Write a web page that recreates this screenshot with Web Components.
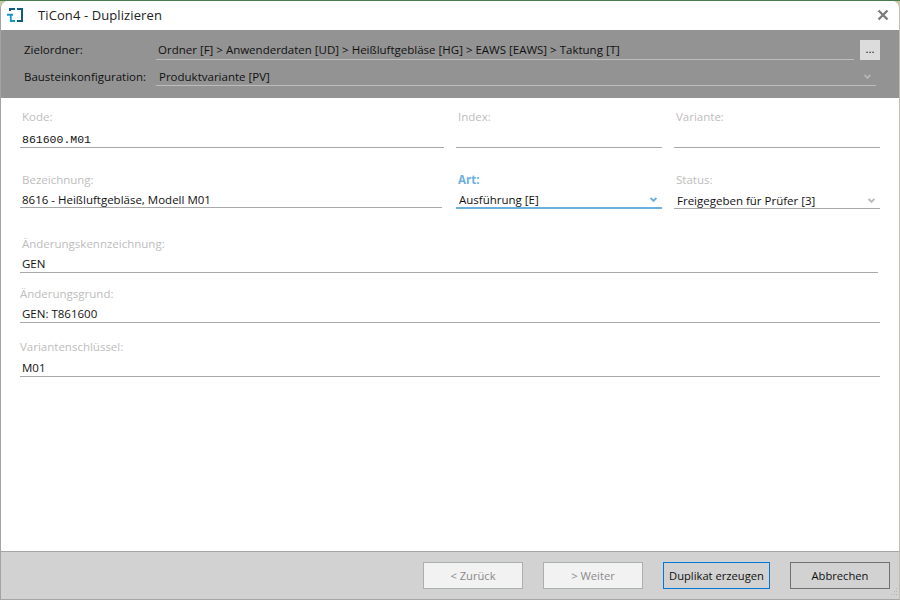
<!DOCTYPE html>
<html lang="de">
<head>
<meta charset="utf-8">
<title>TiCon4 - Duplizieren</title>
<style>
    html, body { margin: 0; height: 100%; overflow: hidden; }
    body { background: #c9c9a6; border-top: 1px solid #4b7a4b; box-sizing: border-box; font-family: "Open Sans", "Noto Sans", sans-serif; }
</style>
</head>
<body>

<ti-window caption="TiCon4 - Duplizieren">
    <ti-target slot="band" label="Zielordner:" value="Ordner [F] &gt; Anwenderdaten [UD] &gt; Heißluftgebläse [HG] &gt; EAWS [EAWS] &gt; Taktung [T]" browse></ti-target>
    <ti-target slot="band" label="Bausteinkonfiguration:" value="Produktvariante [PV]" select></ti-target>

    <ti-field-grid>
        <ti-field label="Kode:" value="861600.M01" mono style="--label-gap: 4px; --value-top: 5px"></ti-field>
        <ti-field label="Index:" value="" style="--label-gap: 4px"></ti-field>
        <ti-field label="Variante:" value="" style="--label-gap: 4px"></ti-field>
        <ti-field label="Bezeichnung:" value="8616 - Heißluftgebläse, Modell M01" style="margin: 25px 2px 1px 0"></ti-field>
        <ti-field label="Art:" value="Ausführung [E]" select focused style="margin-top: 25px; --value-height: 21px; --value-top: 5px"></ti-field>
        <ti-field label="Status:" value="Freigegeben für Prüfer [3]" select style="margin-top: 25px; --value-height: 21px; --value-top: 5px"></ti-field>
        <ti-field label="Änderungskennzeichnung:" value="GEN" style="grid-column: 1 / -1; margin: 28px 2px 0 0; --value-height: 21px"></ti-field>
        <ti-field label="Änderungsgrund:" value="GEN: T861600" flush style="grid-column: 1 / -1; margin-top: 14px; --value-height: 21px"></ti-field>
        <ti-field label="Variantenschlüssel:" value="M01" flush style="grid-column: 1 / -1; margin-top: 17px; --value-height: 22px"></ti-field>
    </ti-field-grid>

    <ti-button slot="footer" disabled>&lt; Zurück</ti-button>
    <ti-button slot="footer" disabled>&gt; Weiter</ti-button>
    <ti-button slot="footer" primary>Duplikat erzeugen</ti-button>
    <ti-button slot="footer">Abbrechen</ti-button>
</ti-window>

<script>
(function() {
    const chevron = (color) => `<svg class="chevron" width="7" height="6" viewBox="0 0 7 6"><path d="M.6 1 L3.5 3.9 L6.4 1" fill="none" stroke="${color}" stroke-width="2"/></svg>`;

    /*
     *     Window frame: caption, grey band, content, footer
     */
    class TiWindow extends HTMLElement {
        constructor() {
            super();
            this.attachShadow({mode: 'open'});
            this.shadowRoot.innerHTML = `
<style>
    :host { display: flex; flex-direction: column; height: 599px; box-sizing: border-box; background: #fff; border-radius: 8px 8px 0 0; border-left: 1px solid #a3a3a3; border-right: 1px solid #bdbdb0; overflow: hidden; position: relative; }
    .caption { display: flex; align-items: center; height: 29px; flex: none; box-sizing: border-box; padding: 0 0 1px 6px; background: #fff; }
    .caption svg.logo { flex: none; }
    .caption span { margin-left: 13px; font-size: 13px; color: #222; flex: 1; letter-spacing: .1px; }
    .close { margin-right: 10px; }
    .band { flex: none; height: 68px; box-sizing: border-box; padding: 10px 19px 0 22px; background: #939393; display: flex; flex-direction: column; gap: 6px; }
    .main { flex: 1; min-height: 0; background: #fff; }
    .footer { flex: none; height: 49px; box-sizing: border-box; border-top: 1px solid #a6a6a6; border-bottom: 1px solid #a6a6a6; background: #d2d2d2; display: flex; justify-content: flex-end; align-items: center; gap: 20px; padding: 0 9px 0 0; position: relative; }
    .grip { position: absolute; right: 1px; bottom: 1px; }
</style>
<div class="caption">
    <svg class="logo" width="18" height="18" viewBox="0 0 18 18">
        <path d="M3 5 V3 H8 M10 3 H15 V15 H10" fill="none" stroke="#0d5f7f" stroke-width="2"/>
        <path d="M0 8.75 H6 M3.75 8.75 V15 H8" fill="none" stroke="#1496c4" stroke-width="1.8"/>
    </svg>
    <span></span>
    <svg class="close" width="12" height="12" viewBox="0 0 12 12"><path d="M1.5 1.5 L10.5 10.5 M10.5 1.5 L1.5 10.5" stroke="#7c7c7c" stroke-width="2.4"/></svg>
</div>
<div class="band"><slot name="band"></slot></div>
<div class="main"><slot></slot></div>
<div class="footer">
    <slot name="footer"></slot>
    <svg class="grip" width="10" height="10" viewBox="0 0 10 10" fill="#b4b4b4"><rect x="8" y="0" width="1" height="1"/><rect x="6" y="3" width="1" height="1"/><rect x="8" y="3" width="1" height="1"/><rect x="3" y="6" width="1" height="1"/><rect x="6" y="6" width="1" height="1"/><rect x="8" y="6" width="1" height="1"/></svg>
</div>`;
            this.shadowRoot.querySelector('.caption span').textContent = this.getAttribute('caption');
        }
    }

    /*
     *     A row of the grey band
     */
    class TiTarget extends HTMLElement {
        constructor() {
            super();
            this.attachShadow({mode: 'open'});
            this.shadowRoot.innerHTML = `
<style>
    :host { display: flex; align-items: flex-end; height: 20px; font-size: 11.5px; color: #111; position: relative; }
    .label { width: 133px; height: 20px; flex: none; padding-left: 1px; box-sizing: border-box; line-height: 20px; }
    .value { flex: 1; height: 20px; line-height: 16px; box-sizing: border-box; border-bottom: 1px solid #bdbdbd; padding-left: 2px; display: flex; justify-content: space-between; align-items: center; margin-right: 4px; white-space: nowrap; }
    :host([browse]) .value { margin-right: 6px; }
    :host([select]) .label { padding-top: 2px; line-height: 18px; }
    :host([select]) .value { padding: 2px 0 0 3px; }
    .chevron { margin-right: 5px; }
    button { width: 20px; height: 20px; padding: 0 0 2px; border: 0; background: #dcdcdc; color: #111; font: inherit; line-height: 1; }
</style>
<div class="label"></div>
<div class="value"><span></span></div>`;
            this.shadowRoot.querySelector('.label').textContent = this.getAttribute('label');
            this.shadowRoot.querySelector('.value span').textContent = this.getAttribute('value');
            if (this.hasAttribute('browse')) {
                const button = document.createElement('button');
                button.textContent = '...';
                this.shadowRoot.appendChild(button);
            }
            if (this.hasAttribute('select')) {
                this.shadowRoot.querySelector('.value').insertAdjacentHTML('beforeend', chevron('#b4b4b4'));
            }
        }
    }

    /*
     *     Grid holding the form fields
     */
    class TiFieldGrid extends HTMLElement {
        constructor() {
            super();
            this.attachShadow({mode: 'open'});
            this.shadowRoot.innerHTML = `
<style>
    :host { display: grid; grid-template-columns: 424px 206px 206px; column-gap: 12px; padding: 12px 0 0 19px; align-items: end; }
</style>
<slot></slot>`;
        }
    }

    /*
     *     Label over a value with an underline
     */
    class TiField extends HTMLElement {
        constructor() {
            super();
            this.attachShadow({mode: 'open'});
            this.shadowRoot.innerHTML = `
<style>
    :host { display: block; min-width: 0; font-size: 11.5px; color: #111; }
    .label { height: 14px; line-height: 14px; padding-left: 2px; color: #bdbdbd; margin-bottom: var(--label-gap, 1px); white-space: nowrap; }
    :host([flush]) .label { padding-left: 0; }
    .value { height: var(--value-height, 20px); line-height: 16px; box-sizing: border-box; border-bottom: 1px solid #a8a8a8; padding: var(--value-top, 4px) 0 0 2px; display: flex; justify-content: space-between; align-items: center; white-space: nowrap; }
    :host([select]) .value { padding-left: 3px; }
    :host([mono]) .value { font-family: "Liberation Mono", monospace; }
    .chevron { margin-right: 5px; }
    :host([focused]) .label { color: #6bb0e0; font-weight: 700; }
    :host([focused]) .value { border-bottom: 2px solid #6bb0e0; }
</style>
<div class="label"></div>
<div class="value"><span></span></div>`;
            this.shadowRoot.querySelector('.label').textContent = this.getAttribute('label');
            this.shadowRoot.querySelector('.value span').textContent = this.getAttribute('value');
            if (this.hasAttribute('select')) {
                const color = this.hasAttribute('focused') ? '#6bb0e0' : '#bdbdbd';
                this.shadowRoot.querySelector('.value').insertAdjacentHTML('beforeend', chevron(color));
            }
        }
    }

    class TiButton extends HTMLElement {
        constructor() {
            super();
            this.attachShadow({mode: 'open'});
            this.shadowRoot.innerHTML = `
<style>
    :host { display: flex; align-items: center; justify-content: center; width: 100px; height: 27px; box-sizing: border-box; border: 1px solid #707070; background: #d2d2d2; color: #111; font-size: 11.2px; }
    :host([disabled]) { border-color: #aab0b0; background: #f2f2f2; color: #8a8a8a; }
    :host([primary]) { width: 107px; border-color: #0078d7; }
</style>
<slot></slot>`;
        }
    }

    customElements.define('ti-window', TiWindow);
    customElements.define('ti-target', TiTarget);
    customElements.define('ti-field-grid', TiFieldGrid);
    customElements.define('ti-field', TiField);
    customElements.define('ti-button', TiButton);
})();
</script>
</body>
</html>
